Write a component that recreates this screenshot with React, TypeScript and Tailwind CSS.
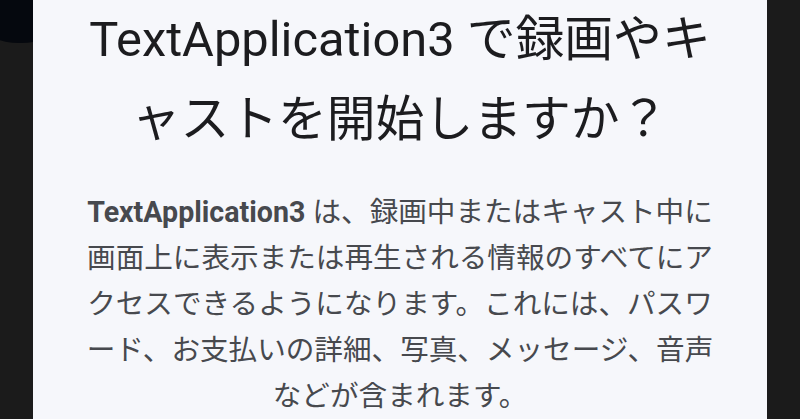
import React from "react";

const FONT = { fontFamily: 'Roboto, "Noto Sans CJK JP", sans-serif' };

const bodyLines = [
  "画面上に表示または再生される情報のすべてにア",
  "クセスできるようになります。これには、パスワ",
  "ード、お支払いの詳細、写真、メッセージ、音声",
  "などが含まれます。",
];

export default function App() {
  return (
    <div className="relative w-[800px] h-[419px] overflow-hidden bg-[#1b1b1b]" style={FONT}>
      {/* dark shape peeking out behind the dialog */}
      <div className="absolute -left-[50px] -top-[95px] w-[140px] h-[138px] rounded-full bg-[#05080e]" />

      <div className="relative mx-[33px] h-full bg-[#f6f7fb] flex flex-col items-center text-center">
        <h1 className="text-[48.8px] leading-[80px] text-[#1c1c1f] font-normal whitespace-nowrap">
          TextApplication3 で録画やキ
          <br />
          ャストを開始しますか？
        </h1>

        <div className="mt-[29px] text-[28.6px] leading-[46px] text-[#47494e] whitespace-nowrap">
          <p>
            <span className="font-bold">TextApplication3</span> は、録画中またはキャスト中に
          </p>
          {bodyLines.map((l) => (
            <p key={l}>{l}</p>
          ))}
        </div>
      </div>
    </div>
  );
}
